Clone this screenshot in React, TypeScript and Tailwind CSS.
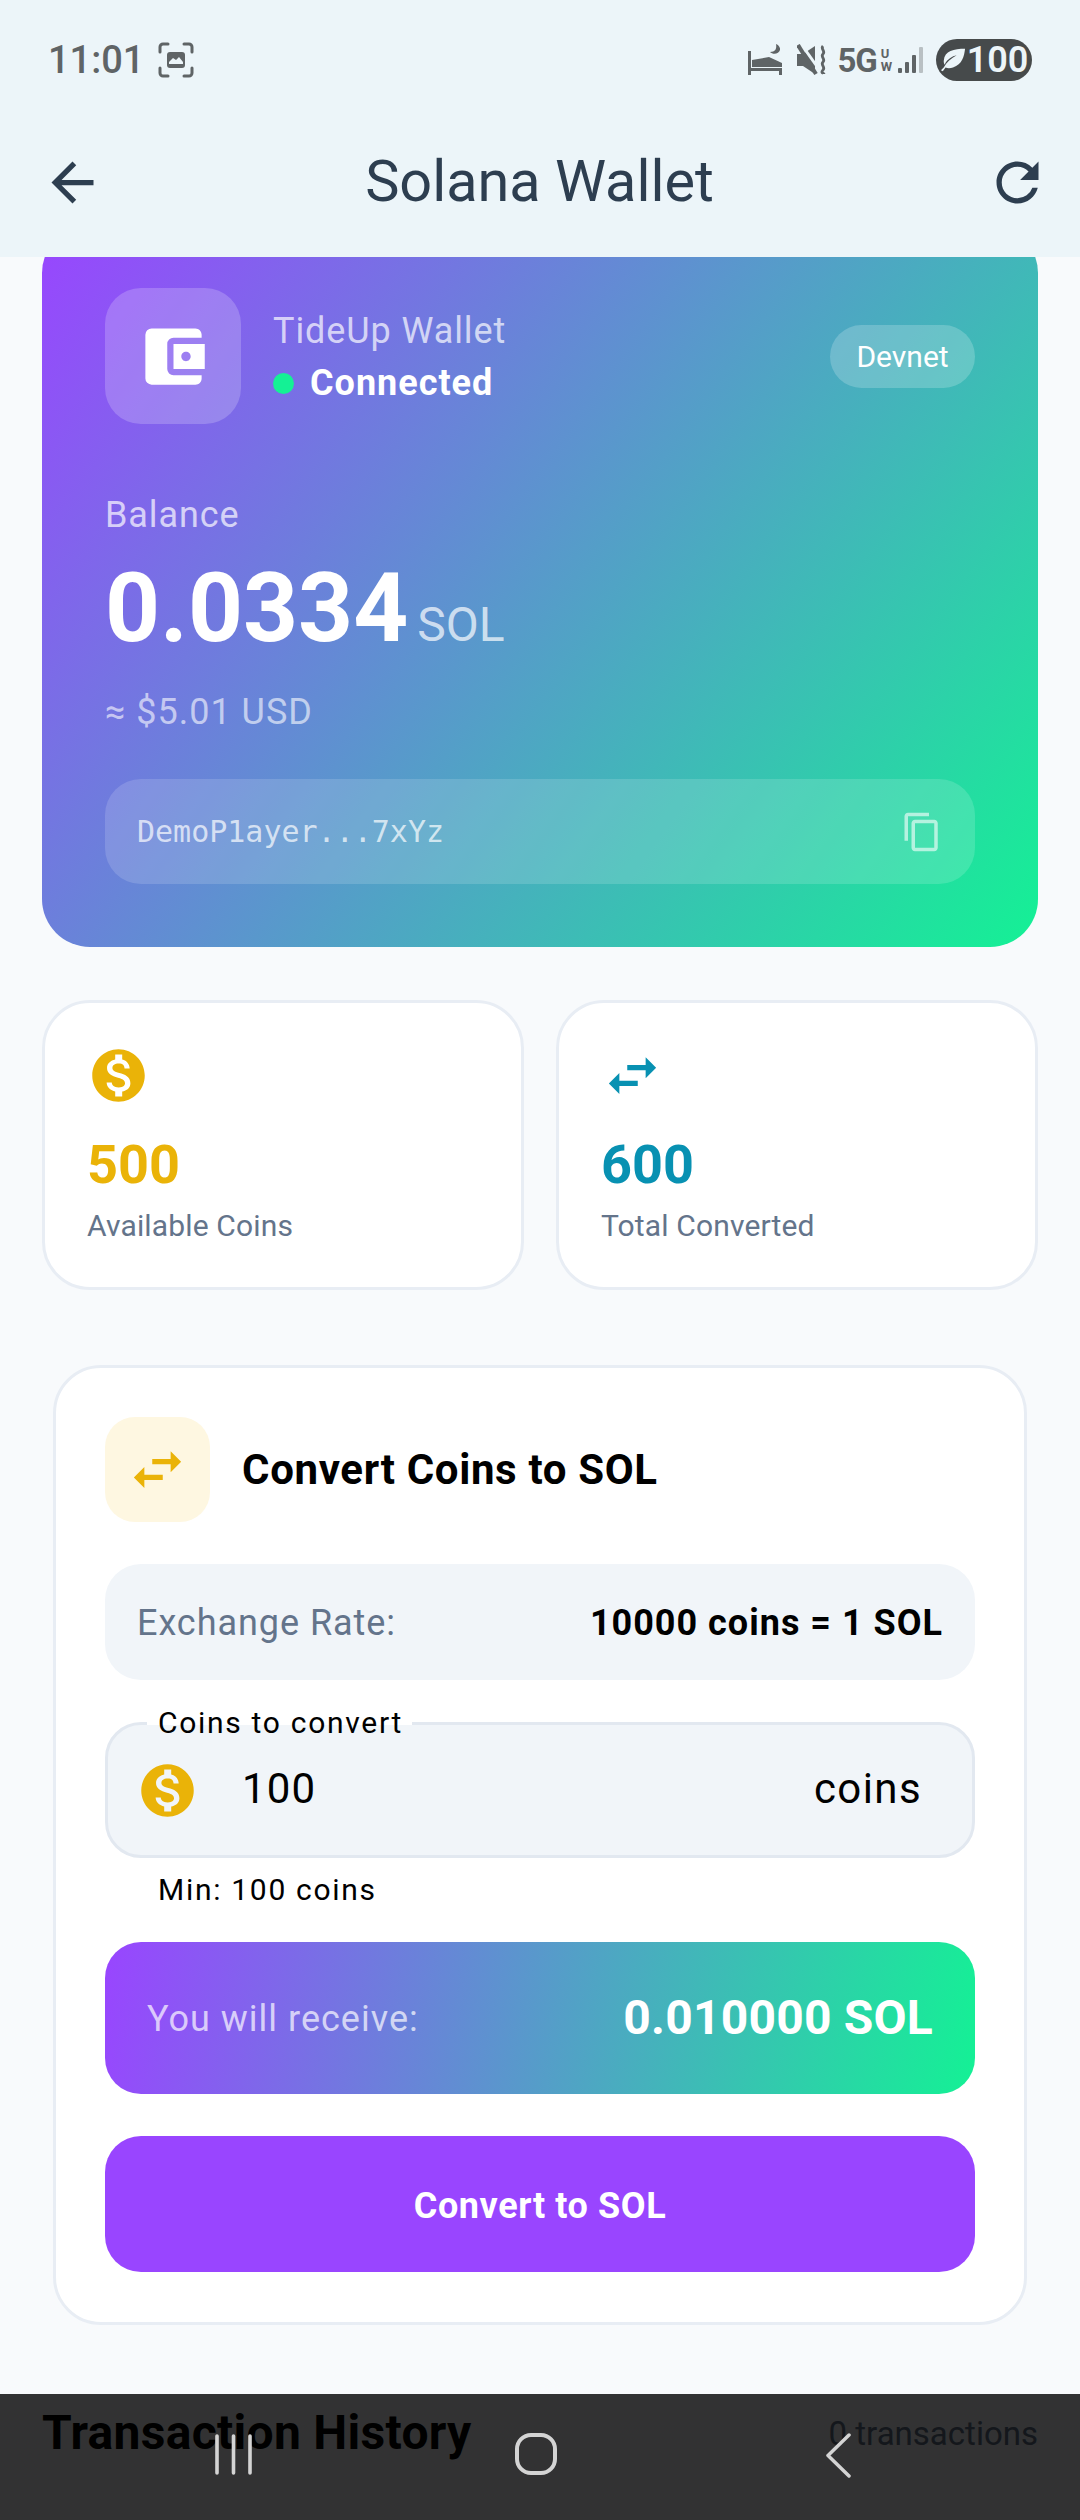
import React from "react";
import { MdArrowBack, MdRefresh, MdAccountBalanceWallet, MdContentCopy, MdMonetizationOn, MdSwapHoriz } from "react-icons/md";

function BedIcon() {
  return (
    <svg width="36" height="34" viewBox="0 0 36 34" fill="#5f6466">
      <path d="M1 8h3v24H1z" />
      <path d="M5 17 L22 14 L35 20 V24 H5z" />
      <path d="M4 25h31v7h-3v-4H4z" />
      <path d="M29 1c1 5-1 8-6 8 3 3 9 2 10-2 .5-2-1-5-4-6z" />
    </svg>
  );
}

function MuteIcon() {
  return (
    <svg width="32" height="32" viewBox="0 0 32 32" fill="none">
      <path d="M0 10h6l12-8v28L6 22H0z" fill="#5f6466" />
      <path d="M4 0l20 28" stroke="#ecf5f9" strokeWidth="3" />
      <path d="M1 1l18 29" stroke="#5f6466" strokeWidth="4" />
      <path d="M26 2c-3 3 3 5 0 8s3 5 0 8 3 5 0 8 1 3 1 4" stroke="#5f6466" strokeWidth="2.8" />
    </svg>
  );
}

function SignalIcon() {
  return (
    <svg width="28" height="28" viewBox="0 0 28 28" fill="#5f6466">
      <rect x="0" y="22" width="4" height="5" rx="1" />
      <rect x="7" y="16" width="4" height="11" rx="1" />
      <rect x="14" y="9" width="4" height="18" rx="1" />
      <rect x="21" y="1" width="4" height="26" rx="1" fill="#b9c0c3" />
    </svg>
  );
}

function ScreenshotIcon() {
  return (
    <svg width="36" height="36" viewBox="0 0 36 36" fill="none">
      <path d="M2 10V5a3 3 0 0 1 3-3h5M26 2h5a3 3 0 0 1 3 3v5M34 26v5a3 3 0 0 1-3 3h-5M10 34H5a3 3 0 0 1-3-3v-5" stroke="#5f6466" strokeWidth="3" strokeLinecap="round" />
      <rect x="9" y="10" width="18" height="16" rx="3" fill="#5f6466" />
      <path d="M11 20l4-4 3 2 3-3 4 5v2H11z" fill="#ecf5f9" />
    </svg>
  );
}

function LeafIcon() {
  return (
    <svg width="26" height="26" viewBox="0 0 28 26" fill="#ecf5f9">
      <path d="M27 1C15 1 5 3 4 14c0 2 .5 3 1 4 3-6 8-9 13-10-6 3-11 8-14 13l-3 3 2 1 3-4c2 1 5 1 8 0C24 18 26 9 27 1z" />
    </svg>
  );
}

function StatCard({ icon, value, label, color }: { icon: React.ReactNode; value: string; label: string; color: string }) {
  return (
    <div className="flex h-[290px] flex-1 flex-col rounded-[48px] border-[3px] border-[#e8edf4] bg-white pl-[42px] pt-[41px]">
      {icon}
      <div className={`mt-[27px] text-[54px] font-bold leading-[62px] ${color}`}>{value}</div>
      <div className="mt-[10px] text-[30px] leading-[40px] tracking-[0.15px] text-[#64748b]">{label}</div>
    </div>
  );
}

export default function App() {
  return (
    <div className="relative flex h-[2520px] w-[1080px] flex-col overflow-hidden bg-[#f8fafc] font-['Roboto',sans-serif]">
      <div className="relative z-10 bg-[#ecf5f9]">
        <div className="flex h-[120px] items-center justify-between pl-[48px] pr-[48px]">
          <div className="flex items-center gap-[14px]">
            <span className="text-[38px] font-medium text-[#5f6466]">11:01</span>
            <ScreenshotIcon />
          </div>
          <div className="flex items-center">
            <BedIcon />
            <span className="ml-[14px]"><MuteIcon /></span>
            <span className="ml-[9px] text-[33px] font-bold leading-none tracking-[-1.2px] text-[#5f6466]">5G</span>
            <span className="ml-[4px] flex flex-col text-[13px] font-bold leading-[13px] text-[#5f6466]">
              <span>U</span>
              <span>W</span>
            </span>
            <span className="ml-[6px]"><SignalIcon /></span>
            <span className="ml-[10px] flex h-[42px] w-[96px] items-center justify-center gap-[1px] rounded-full bg-[#464a4b]">
              <LeafIcon />
              <span className="text-[36px] font-semibold leading-none text-[#ecf5f9]">100</span>
            </span>
          </div>
        </div>
        <div className="flex h-[137px] items-start justify-between pl-[42px] pr-[42px] pt-[31px]">
          <MdArrowBack className="ml-[-1px] text-[#2d3e50]" size={63} />
          <span className="text-[57.6px] leading-[62px] text-[#2d3e50]">Solana Wallet</span>
          <MdRefresh className="translate-x-[11px] text-[#2d3e50]" size={63} />
        </div>
      </div>

      <main className="flex-1 overflow-hidden px-[42px]">
        <section className="mt-[-32px] h-[722px] rounded-[48px] bg-[linear-gradient(126deg,#9945ff,#14f195)] px-[63px] pt-[63px]">
          <div className="flex items-center">
            <div className="flex h-[136px] w-[136px] items-center justify-center rounded-[36px] bg-white/20">
              <MdAccountBalanceWallet className="text-white" size={75} />
            </div>
            <div className="ml-[32px] flex-1">
              <div className="text-[36px] leading-[50px] tracking-[0.9px] text-white/70">TideUp Wallet</div>
              <div className="mt-[4px] flex items-center gap-[16px]">
                <span className="h-[21px] w-[21px] rounded-full bg-[#14f195]" />
                <span className="text-[36px] font-bold leading-[46px] tracking-[1px] text-white">Connected</span>
              </div>
            </div>
            <div className="flex h-[63px] w-[145px] items-center justify-center rounded-full bg-white/20 text-[30px] text-white">Devnet</div>
          </div>
          <div className="mt-[66px] text-[36px] leading-[50px] tracking-[0.9px] text-white/70">Balance</div>
          <div className="mt-[9px] flex items-baseline gap-[9px]">
            <span className="text-[96px] font-bold leading-[118px] text-white">0.0334</span>
            <span className="text-[48px] leading-[50px] text-white/70">SOL</span>
          </div>
          <div className="mt-[23px] text-[36px] leading-[44px] tracking-[1px] text-white/60">≈ $5.01 USD</div>
          <div className="mt-[45px] flex h-[105px] items-center justify-between rounded-[36px] bg-white/15 pl-[32px] pr-[32px]">
            <span className="font-['DejaVu_Sans_Mono',monospace] text-[30px] text-white/70">DemoP1ayer...7xYz</span>
            <MdContentCopy className="text-white/60" size={42} />
          </div>
        </section>

        <div className="mt-[53px] flex gap-[32px]">
          <StatCard
            icon={<MdMonetizationOn className="text-[#eab308]" size={63} />}
            value="500"
            label="Available Coins"
            color="text-[#eab308]"
          />
          <StatCard
            icon={<MdSwapHoriz className="text-[#0891b2]" size={63} />}
            value="600"
            label="Total Converted"
            color="text-[#0891b2]"
          />
        </div>

        <section className="mx-[11px] mt-[75px] h-[960px] rounded-[48px] border-[3px] border-[#e8edf4] bg-white px-[49px] pt-[49px]">
          <div className="flex items-center gap-[32px]">
            <div className="flex h-[105px] w-[105px] items-center justify-center rounded-[30px] bg-[#fef7e1]">
              <MdSwapHoriz className="text-[#eab308]" size={63} />
            </div>
            <span className="text-[42px] font-bold leading-[50px] tracking-[0.65px] text-black">Convert Coins to SOL</span>
          </div>
          <div className="mt-[42px] flex h-[116px] items-center justify-between rounded-[36px] bg-[#f1f5f9] px-[32px] pt-[2px]">
            <span className="text-[36px] tracking-[0.95px] text-[#64748b]">Exchange Rate:</span>
            <span className="text-[36px] font-bold tracking-[1px] text-black">10000 coins = 1 SOL</span>
          </div>
          <div className="relative mt-[42px] flex h-[136px] items-center rounded-[36px] border-[3px] border-[#e2e8f0] bg-[#f1f5f9] pl-[34px] pr-[50px]">
            <MdMonetizationOn className="ml-[-6px] text-[#eab308]" size={63} />
            <span className="mb-[3px] ml-[43px] flex-1 text-[42px] tracking-[1.2px] text-black">100</span>
            <span className="mb-[3px] text-[42px] tracking-[1.4px] text-black">coins</span>
            <span className="absolute left-[39px] top-[-3px] h-[3px] w-[265px] bg-white" />
            <span className="absolute left-[50px] top-[-21px] text-[30px] leading-[38px] tracking-[1.7px] text-black">Coins to convert</span>
          </div>
          <div className="ml-[53px] mt-[13px] text-[30px] leading-[38px] tracking-[1.7px] text-black">Min: 100 coins</div>
          <div className="mt-[33px] flex h-[152px] items-center justify-between rounded-[36px] bg-[linear-gradient(100deg,#9945ff,#14f195)] px-[42px]">
            <span className="pt-[2px] text-[36px] tracking-[1px] text-white/70">You will receive:</span>
            <span className="text-[48px] font-bold tracking-[0.2px] text-white">0.010000 SOL</span>
          </div>
          <div className="mt-[42px] flex h-[136px] items-center justify-center rounded-[36px] bg-[#9945ff] pt-[3px] text-[36px] font-bold tracking-[0.6px] text-white">Convert to SOL</div>
        </section>

        <div className="mt-[78px] flex items-center justify-between">
          <span className="text-[48px] font-bold leading-[60px] tracking-[0.3px] text-black">Transaction History</span>
          <span className="mt-[2px] text-[33px] text-[#64748b]">0 transactions</span>
        </div>
      </main>

      <div className="absolute bottom-0 left-0 right-0 z-20 h-[126px] bg-black/80">
        <div className="relative h-full w-full">
          <svg className="absolute left-[213px] top-[39px]" width="42" height="42" viewBox="0 0 42 42" fill="none" stroke="#d4d4d4" strokeWidth="3.6" strokeLinecap="round">
            <path d="M4 3v37M20.5 3v37M37 3v37" />
          </svg>
          <svg className="absolute left-[514px] top-[38px]" width="44" height="44" viewBox="0 0 44 44" fill="none" stroke="#d4d4d4" strokeWidth="4">
            <rect x="3" y="3" width="38" height="38" rx="14" />
          </svg>
          <svg className="absolute left-[825px] top-[38px]" width="28" height="46" viewBox="0 0 28 46" fill="none" stroke="#d4d4d4" strokeWidth="3.5" strokeLinecap="round" strokeLinejoin="round">
            <path d="M24 3L3 23.5L24 44" />
          </svg>
        </div>
      </div>
    </div>
  );
}
